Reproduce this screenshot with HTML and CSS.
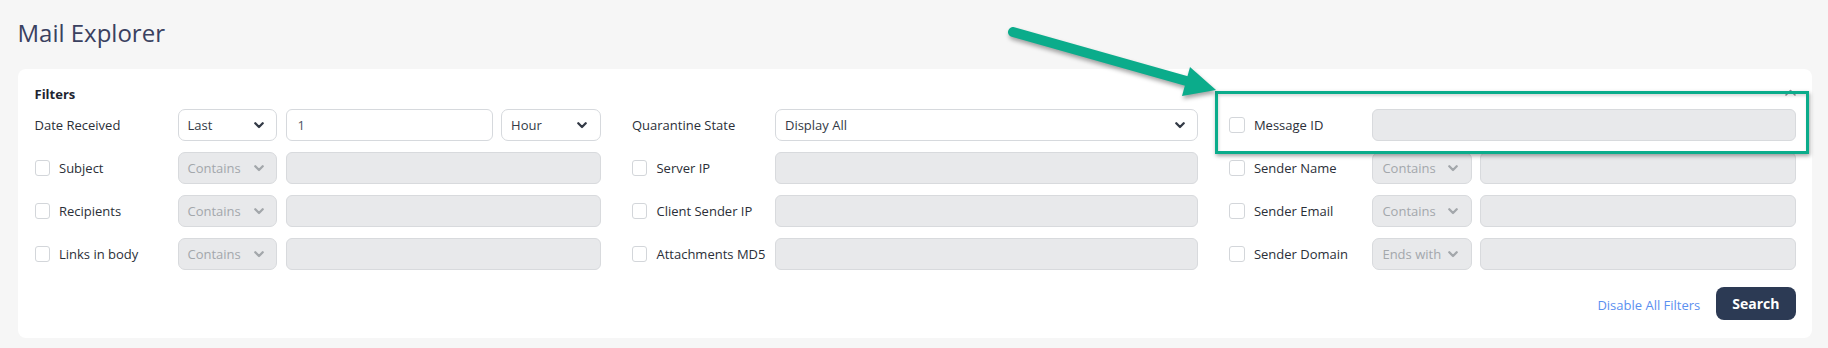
FILE: index.html
```html
<!DOCTYPE html>
<html lang="en">
<head>
<meta charset="utf-8">
<title>Mail Explorer</title>
<link rel="stylesheet" href="styles.css">
</head>
<body>
<div class="page">
  <h1 class="title">Mail Explorer</h1>
  <section class="card">
    <div class="card-head">
      <span class="card-title">Filters</span>
      <svg class="chev-up" viewBox="0 0 11 7"><polyline points="1,6 5.5,1.5 10,6" fill="none" stroke="#8d9298" stroke-width="1.6" stroke-linecap="round" stroke-linejoin="round"/></svg>
    </div>
    <div class="grid">
      <div class="field">
        <div class="label">Date Received</div>
        <div class="controls">
          <div class="select"><span>Last</span><svg class="chev" viewBox="0 0 10 7"><polyline points="1.3,1.3 5,5 8.7,1.3" fill="none" stroke="currentColor" stroke-width="2.3" stroke-linecap="round" stroke-linejoin="round"/></svg></div>
          <div class="input">1</div>
          <div class="select"><span>Hour</span><svg class="chev" viewBox="0 0 10 7"><polyline points="1.3,1.3 5,5 8.7,1.3" fill="none" stroke="currentColor" stroke-width="2.3" stroke-linecap="round" stroke-linejoin="round"/></svg></div>
        </div>
      </div>
      <div class="field">
        <div class="label">Quarantine State</div>
        <div class="controls">
          <div class="select wide"><span>Display All</span><svg class="chev" viewBox="0 0 10 7"><polyline points="1.3,1.3 5,5 8.7,1.3" fill="none" stroke="currentColor" stroke-width="2.3" stroke-linecap="round" stroke-linejoin="round"/></svg></div>
        </div>
      </div>
      <div class="field">
        <div class="label"><span class="check"></span>Message ID</div>
        <div class="controls">
          <div class="input disabled"></div>
        </div>
      </div>

      <div class="field">
        <div class="label"><span class="check"></span>Subject</div>
        <div class="controls">
          <div class="select disabled"><span>Contains</span><svg class="chev" viewBox="0 0 10 7"><polyline points="1.3,1.3 5,5 8.7,1.3" fill="none" stroke="currentColor" stroke-width="2.3" stroke-linecap="round" stroke-linejoin="round"/></svg></div>
          <div class="input disabled"></div>
        </div>
      </div>
      <div class="field">
        <div class="label"><span class="check"></span>Server IP</div>
        <div class="controls">
          <div class="input disabled"></div>
        </div>
      </div>
      <div class="field">
        <div class="label"><span class="check"></span>Sender Name</div>
        <div class="controls">
          <div class="select disabled"><span>Contains</span><svg class="chev" viewBox="0 0 10 7"><polyline points="1.3,1.3 5,5 8.7,1.3" fill="none" stroke="currentColor" stroke-width="2.3" stroke-linecap="round" stroke-linejoin="round"/></svg></div>
          <div class="input disabled"></div>
        </div>
      </div>

      <div class="field">
        <div class="label"><span class="check"></span>Recipients</div>
        <div class="controls">
          <div class="select disabled"><span>Contains</span><svg class="chev" viewBox="0 0 10 7"><polyline points="1.3,1.3 5,5 8.7,1.3" fill="none" stroke="currentColor" stroke-width="2.3" stroke-linecap="round" stroke-linejoin="round"/></svg></div>
          <div class="input disabled"></div>
        </div>
      </div>
      <div class="field">
        <div class="label"><span class="check"></span>Client Sender IP</div>
        <div class="controls">
          <div class="input disabled"></div>
        </div>
      </div>
      <div class="field">
        <div class="label"><span class="check"></span>Sender Email</div>
        <div class="controls">
          <div class="select disabled"><span>Contains</span><svg class="chev" viewBox="0 0 10 7"><polyline points="1.3,1.3 5,5 8.7,1.3" fill="none" stroke="currentColor" stroke-width="2.3" stroke-linecap="round" stroke-linejoin="round"/></svg></div>
          <div class="input disabled"></div>
        </div>
      </div>

      <div class="field">
        <div class="label"><span class="check"></span>Links in body</div>
        <div class="controls">
          <div class="select disabled"><span>Contains</span><svg class="chev" viewBox="0 0 10 7"><polyline points="1.3,1.3 5,5 8.7,1.3" fill="none" stroke="currentColor" stroke-width="2.3" stroke-linecap="round" stroke-linejoin="round"/></svg></div>
          <div class="input disabled"></div>
        </div>
      </div>
      <div class="field">
        <div class="label"><span class="check"></span>Attachments MD5</div>
        <div class="controls">
          <div class="input disabled"></div>
        </div>
      </div>
      <div class="field">
        <div class="label"><span class="check"></span>Sender Domain</div>
        <div class="controls">
          <div class="select disabled"><span>Ends with</span><svg class="chev" viewBox="0 0 10 7"><polyline points="1.3,1.3 5,5 8.7,1.3" fill="none" stroke="currentColor" stroke-width="2.3" stroke-linecap="round" stroke-linejoin="round"/></svg></div>
          <div class="input disabled"></div>
        </div>
      </div>
    </div>
    <div class="footer">
      <a class="link" href="#">Disable All Filters</a>
      <button class="btn" type="button">Search</button>
    </div>
  </section>

  <div class="highlight"></div>
  <svg class="arrow" viewBox="0 0 1828 348">
    <line x1="1013" y1="32" x2="1190" y2="82" stroke="#0bac8b" stroke-width="10" stroke-linecap="round"/>
    <polygon points="1190,67 1216,90 1182,96" fill="#0bac8b"/>
  </svg>
</div>
</body>
</html>
```

FILE: styles.css
```css
* { box-sizing: border-box; }
html, body { margin: 0; padding: 0; }
body {
  background: #f6f6f6;
  font-family: "Open Sans", "Noto Sans", sans-serif;
  color: #2b2f38;
  overflow: hidden;
}
.page {
  position: relative;
  height: 348px;
  padding: 17px 16.5px 0 17.5px;
}
.title {
  margin: 0 0 20px;
  font-size: 24px;
  line-height: 32px;
  font-weight: 400;
  color: #3a4160;
}
.card {
  background: #fff;
  border-radius: 8px;
  padding: 16px 16px 18px 17px;
}
.card-head {
  display: flex;
  justify-content: space-between;
  align-items: center;
  height: 18px;
  margin-bottom: 6px;
}
.card-title {
  font-size: 13px;
  font-weight: 700;
  line-height: 18px;
  color: #1e2430;
}
.chev-up { width: 11px; height: 7px; margin-top: -3px; }
.grid {
  display: grid;
  grid-template-columns: repeat(3, 1fr);
  column-gap: 31.4px;
  row-gap: 11px;
}
.field {
  display: grid;
  grid-template-columns: 143px 1fr;
  align-items: center;
  height: 32px;
}
.label {
  display: flex;
  align-items: center;
  gap: 9px;
  font-size: 13px;
  line-height: 18px;
  white-space: nowrap;
  color: #2b2f38;
}
.check {
  width: 15.5px;
  height: 15.5px;
  flex: none;
  border: 1.5px solid #d3d6da;
  border-radius: 3px;
  background: #fff;
}
.controls {
  display: flex;
  gap: 8.5px;
  height: 32px;
}
.select {
  width: 99.5px;
  flex: none;
  display: flex;
  align-items: center;
  justify-content: space-between;
  padding: 0 12.5px 0 9px;
  border: 1px solid #d6d9dd;
  border-radius: 7px;
  background: #fff;
  font-size: 13px;
  color: #333a46;
  white-space: nowrap;
}
.select.wide { flex: 1; width: auto; }
.input {
  flex: 1;
  display: flex;
  align-items: center;
  padding: 0 11px;
  border: 1px solid #d6d9dd;
  border-radius: 6px;
  background: #fff;
  font-size: 13px;
  color: #4f5566;
}
.disabled {
  background: #e8e9eb;
  border-color: #d8dadd;
  color: #a3a7ab;
}
.chev { width: 10px; height: 7px; flex: none; }
.footer {
  display: flex;
  justify-content: flex-end;
  align-items: center;
  gap: 16px;
  margin-top: 17px;
}
.link {
  font-size: 13px;
  color: #5b8ff0;
  text-decoration: none;
  margin-top: 2px;
}
.btn {
  height: 33px;
  padding: 0 16px;
  border: none;
  border-radius: 8px;
  background: #2c3a54;
  color: #fff;
  font-family: "Open Sans", "Noto Sans", sans-serif;
  font-size: 14px;
  font-weight: 700;
}
.highlight {
  position: absolute;
  left: 1215px;
  top: 91px;
  width: 594px;
  height: 63px;
  border: 3px solid #0bac8b;
  box-shadow: 1px 2px 4px rgba(0, 0, 0, 0.35), inset 1px 2px 3px rgba(0, 0, 0, 0.15);
}
.arrow {
  position: absolute;
  left: 0;
  top: 0;
  width: 1828px;
  height: 348px;
  pointer-events: none;
  filter: drop-shadow(1px 3px 2px rgba(0, 0, 0, 0.35));
}
```
